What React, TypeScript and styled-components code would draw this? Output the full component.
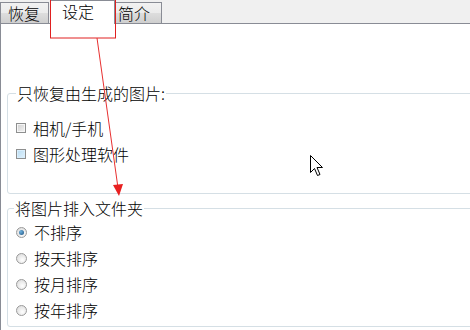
import React from "react";
import styled, { createGlobalStyle } from "styled-components";

const Global = createGlobalStyle`
  html, body {
    margin: 0;
    padding: 0;
    background: #ffffff;
  }
  body {
    font-family: "Noto Sans CJK SC", "Noto Sans", sans-serif;
    font-weight: 300;
    color: #000;
  }
`;

const Window = styled.div`
  position: relative;
  width: 470px;
  height: 330px;
  overflow: hidden;
  background: #fff;
  display: flex;
  flex-direction: column;
`;

const TabBar = styled.div`
  display: flex;
  align-items: flex-end;
  height: 23px;
  background: #f0f0f0;
  border-bottom: 1px solid #898c95;
  flex-shrink: 0;
`;

const Tab = styled.div<{ $active?: boolean; $w: number; $pad: number }>`
  box-sizing: border-box;
  display: flex;
  align-items: flex-start;
  justify-content: flex-start;
  font-size: 16px;
  line-height: 20px;
  border: 1px solid #898c95;
  border-bottom: none;
  margin-left: ${(p) => (p.$active ? "1px" : "0")};
  height: ${(p) => (p.$active ? "24px" : "21px")};
  margin-bottom: ${(p) => (p.$active ? "-1px" : "0")};
  width: ${(p) => p.$w}px;
  padding-left: ${(p) => p.$pad}px;
  padding-top: 0;
  background: ${(p) =>
    p.$active ? "#ffffff" : "linear-gradient(#f2f2f2, #ebebeb 50%, #dddddd 51%, #cfcfcf)"};
  position: relative;
  z-index: ${(p) => (p.$active ? 1 : 0)};
`;

const Panel = styled.div`
  flex: 1;
  border-left: 1px solid #898c95;
  padding: 0 0 0 6px;
  display: flex;
  flex-direction: column;
`;

const Group = styled.fieldset<{ $top: number }>`
  margin: ${(p) => p.$top}px 0 0 0;
  width: 480px;
  box-sizing: border-box;
  border: 1px solid #d5dfe5;
  border-radius: 3px;
  padding: 0 0 0 8px;
`;

const Legend = styled.legend<{ $shift: number }>`
  font-size: 16px;
  line-height: 20px;
  padding: 0 1px;
  margin-left: ${(p) => p.$shift}px;
`;

const List = styled.div<{ $padTop: number; $padBottom: number }>`
  display: flex;
  flex-direction: column;
  padding-top: ${(p) => p.$padTop}px;
  padding-bottom: ${(p) => p.$padBottom}px;
`;

const Row = styled.div`
  display: flex;
  align-items: center;
  height: 26px;
  font-size: 16px;
  gap: 7px;
`;

const CheckBox = styled.span<{ $hover?: boolean }>`
  box-sizing: border-box;
  width: 10px;
  height: 10px;
  border: 1px solid #8e8f8f;
  background: ${(p) =>
    p.$hover
      ? "linear-gradient(135deg, #b9dcf3, #e2f2fc)"
      : "linear-gradient(135deg, #cfcfcf, #f4f4f4)"};
  box-shadow: inset 0 0 0 1px ${(p) => (p.$hover ? "#d9eefc" : "#f6f6f6")};
`;

const Radio = styled.span<{ $checked?: boolean }>`
  box-sizing: border-box;
  width: 11px;
  height: 11px;
  border-radius: 50%;
  border: 1px solid #9a9a9a;
  background: radial-gradient(circle at 60% 65%, #ffffff, #d6d6d6);
  display: flex;
  align-items: center;
  justify-content: center;
  &::after {
    content: "";
    display: ${(p) => (p.$checked ? "block" : "none")};
    width: 5px;
    height: 5px;
    border-radius: 50%;
    background: radial-gradient(circle at 35% 35%, #6fb3e0, #1b4f7c);
  }
`;

const Overlay = styled.svg`
  position: absolute;
  left: 0;
  top: 0;
  pointer-events: none;
  z-index: 5;
`;

function App() {
  return (
    <Window>
      <Global />
      <TabBar>
        <Tab $w={49} $pad={7}>恢复</Tab>
        <Tab $active $w={65} $pad={11}>设定</Tab>
        <Tab $w={47} $pad={2}>简介</Tab>
      </TabBar>
      <Panel>
        <Group $top={59}>
          <Legend $shift={0}>只恢复由生成的图片:</Legend>
          <List $padTop={12} $padBottom={26}>
            <Row>
              <CheckBox />
              <span>相机/手机</span>
            </Row>
            <Row>
              <CheckBox $hover />
              <span>图形处理软件</span>
            </Row>
          </List>
        </Group>
        <Group $top={4}>
          <Legend $shift={-2}>将图片排入文件夹</Legend>
          <List $padTop={1} $padBottom={3}>
            <Row>
              <Radio $checked />
              <span>不排序</span>
            </Row>
            <Row>
              <Radio />
              <span>按天排序</span>
            </Row>
            <Row>
              <Radio />
              <span>按月排序</span>
            </Row>
            <Row>
              <Radio />
              <span>按年排序</span>
            </Row>
          </List>
        </Group>
      </Panel>
      <Overlay width="470" height="330" viewBox="0 0 470 330">
        <rect x="50.5" y="-1" width="65" height="39" fill="none" stroke="#e02020" strokeWidth="1" />
        <line x1="97" y1="38" x2="118" y2="188" stroke="#e83030" strokeWidth="1" />
        <polygon points="113,185 123,184 119,196" fill="#e82020" />
        <path
          d="M310.5 155.5 L310.5 172.5 L314.5 168.5 L317.5 175.5 L320 174.5 L317 167.5 L322.5 167.5 Z"
          fill="#fff"
          stroke="#000"
          strokeWidth="1"
          strokeLinejoin="miter"
        />
      </Overlay>
    </Window>
  );
}

export default App;
